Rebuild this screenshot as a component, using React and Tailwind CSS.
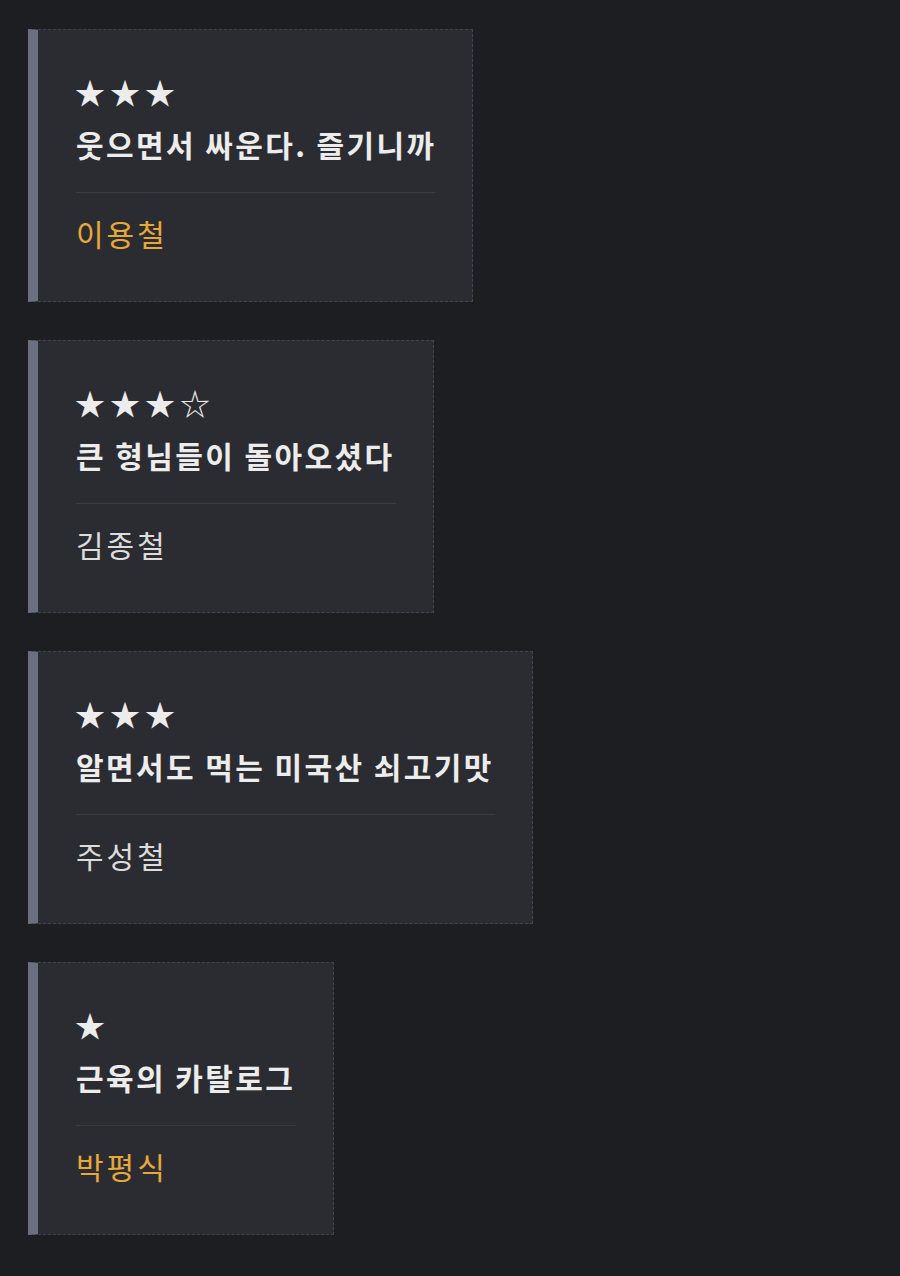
import React from 'react';

// Quote cards: rating, one-line review, reviewer name
const reviews = [
    { stars: '★★★', text: '웃으면서 싸운다. 즐기니까', name: '이용철', highlight: true, width: 'w-[445px]' },
    { stars: '★★★☆', text: '큰 형님들이 돌아오셨다', name: '김종철', highlight: false, width: 'w-[406px]' },
    { stars: '★★★', text: '알면서도 먹는 미국산 쇠고기맛', name: '주성철', highlight: false, width: 'w-[505px]' },
    { stars: '★', text: '근육의 카탈로그', name: '박평식', highlight: true, width: 'w-[306px]' },
];

const font = { fontFamily: '"Noto Sans CJK KR", "Noto Sans", sans-serif' };

export default function App() {
    return (
        <div className="min-h-screen bg-[#1d1e21] pl-[28px] pt-[29px] pb-10" style={font}>
            <div className="flex flex-col gap-[38px]">
                {reviews.map((r, i) => (
                    <ReviewCard key={i} {...r} />
                ))}
            </div>
        </div>
    );
}

function ReviewCard({ stars, text, name, highlight, width }) {
    return (
        <div
            className={`${width} h-[273px] bg-[#2b2c31] border border-dashed border-[#42454c] border-l-[10px] [border-left-style:solid] border-l-[#6b7080] pl-[38px] pr-[37px] pt-[41px]`}
        >
            <div className="text-[30px] leading-[40px] text-[#ececec] tracking-[5px] -ml-[1px]">{stars}</div>
            <div className="mt-[11px] text-[30px] leading-[44px] font-bold text-[#ececec] tracking-[2.4px] whitespace-nowrap">
                {text}
            </div>
            <div className="mt-[26px] h-px bg-[#3a3c43]" />
            <div
                className={`mt-[18px] text-[30px] leading-[44px] tracking-[3px] whitespace-nowrap ${highlight ? 'text-[#e8a838]' : 'text-[#dcdcdc]'}`}
            >
                {name}
            </div>
        </div>
    );
}
